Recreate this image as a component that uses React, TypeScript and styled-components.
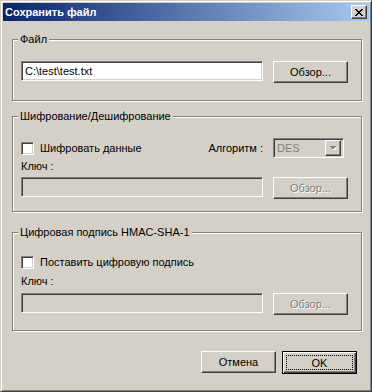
import React from 'react';
import styled, { createGlobalStyle, css } from 'styled-components';

const Global = createGlobalStyle`
  html, body {
    margin: 0;
    padding: 0;
    background: #d4d0c8;
  }
  * {
    box-sizing: border-box;
  }
`;

const FONT = `'Liberation Sans', 'DejaVu Sans', sans-serif`;

const raised = css`
  border: 1px solid;
  border-color: #fff #404040 #404040 #fff;
  box-shadow: inset -1px -1px 0 #808080, inset 1px 1px 0 #d4d0c8;
`;

const sunken = css`
  border: 1px solid;
  border-color: #808080 #fff #fff #808080;
  box-shadow: inset 1px 1px 0 #404040, inset -1px -1px 0 #d4d0c8;
`;

const Window = styled.div`
  width: 372px;
  height: 392px;
  display: flex;
  flex-direction: column;
  padding: 2px;
  background: #d4d0c8;
  border: 1px solid;
  border-color: #d4d0c8 #404040 #404040 #d4d0c8;
  box-shadow: inset 1px 1px 0 #fff, inset -1px -1px 0 #808080;
  font-family: ${FONT};
  font-size: 11px;
  color: #000;
`;

const TitleBar = styled.div`
  height: 18px;
  display: flex;
  align-items: center;
  justify-content: space-between;
  padding: 0 2px 0 2px;
  background: linear-gradient(to right, #0a246a, #a6caf0);
  color: #fff;
  font-weight: bold;
  font-size: 11px;
`;

const CloseButton = styled.div`
  width: 16px;
  height: 14px;
  display: flex;
  align-items: center;
  justify-content: center;
  background: #d4d0c8;
  ${raised};
`;

const Body = styled.div`
  flex: 1;
  display: flex;
  flex-direction: column;
  padding: 12px 7px 0 9px;
`;

const Group = styled.fieldset<{ $top: number; $pt: number; $pb: number }>`
  margin: ${(p) => p.$top}px 0 0 0;
  padding: ${(p) => p.$pt}px 13px ${(p) => p.$pb}px 8px;
  border: 1px solid #808080;
  box-shadow: inset 1px 1px 0 #fff, 1px 1px 0 #fff;
  min-width: 0;
`;

const Legend = styled.legend`
  margin-left: -3px;
  padding: 0 2px;
  line-height: 13px;
  background: #d4d0c8;
`;

const Row = styled.div<{ $h: number }>`
  display: flex;
  align-items: center;
  gap: 10px;
  height: ${(p) => p.$h}px;
`;

const TextBox = styled.div<{ $disabled?: boolean }>`
  width: 242px;
  height: 20px;
  align-self: flex-start;
  display: flex;
  align-items: center;
  padding-left: 3px;
  background: ${(p) => (p.$disabled ? '#d4d0c8' : '#fff')};
  ${sunken};
`;

const Button = styled.div<{ $disabled?: boolean; $default?: boolean }>`
  position: relative;
  width: 75px;
  height: ${(p) => (p.$default ? 23 : 22)}px;
  display: flex;
  align-items: center;
  justify-content: center;
  background: #d4d0c8;
  color: ${(p) => (p.$disabled ? '#808080' : '#000')};
  text-shadow: ${(p) => (p.$disabled ? '1px 1px 0 #fff' : 'none')};
  ${raised};
  ${(p) =>
    p.$default &&
    css`
      border: 1px solid #000;
      box-shadow: inset 1px 1px 0 #fff, inset -1px -1px 0 #404040, inset -2px -2px 0 #808080;
    `}
`;

const FocusRect = styled.span`
  position: absolute;
  inset: 3px;
  border: 1px dotted #000;
`;

const CheckLabel = styled.label`
  flex: 1;
  display: flex;
  align-items: center;
  gap: 6px;
`;

const CheckBox = styled.span`
  width: 13px;
  height: 13px;
  background: #fff;
  ${sunken};
`;

const FieldLabel = styled.div<{ $mt: number; $mb: number }>`
  line-height: 13px;
  margin: ${(p) => p.$mt}px 0 ${(p) => p.$mb}px 0;
`;

const AlgoLabel = styled.span``;

const Select = styled.div`
  width: 71px;
  height: 20px;
  margin-right: 4px;
  display: flex;
  align-items: center;
  justify-content: space-between;
  padding: 2px 2px 2px 3px;
  background: #d4d0c8;
  color: #808080;
  ${sunken};
`;

const DropButton = styled.div`
  width: 16px;
  height: 16px;
  display: flex;
  align-items: center;
  justify-content: center;
  ${raised};
`;

const Footer = styled.div`
  display: flex;
  justify-content: flex-end;
  gap: 6px;
  margin-top: 20px;
  padding-right: 5px;
`;

const xRows = ['xx....xx', '.xx..xx.', '..xxxx..', '...xx...', '..xxxx..', '.xx..xx.', 'xx....xx'];

const CloseGlyph = () => (
  <svg width="8" height="7" viewBox="0 0 8 7" shapeRendering="crispEdges">
    {xRows.map((r, y) =>
      r.split('').map((c, x) => (c === 'x' ? <rect key={`${x}-${y}`} x={x} y={y} width="1" height="1" fill="#000" /> : null))
    )}
  </svg>
);

const ArrowGlyph = () => (
  <svg width="8" height="5" viewBox="0 0 8 5" shapeRendering="crispEdges">
    <polygon points="1,1 8,1 4.5,4.5" fill="#fff" />
    <polygon points="0,0 7,0 3.5,3.5" fill="#808080" />
  </svg>
);

const App: React.FC = () => {
  return (
    <>
      <Global />
      <Window>
        <TitleBar>
          <span>Сохранить файл</span>
          <CloseButton>
            <CloseGlyph />
          </CloseButton>
        </TitleBar>
        <Body>
          <Group $top={0} $pt={15} $pb={17}>
            <Legend>Файл</Legend>
            <Row $h={22}>
              <TextBox>C:\test\test.txt</TextBox>
              <Button>Обзор...</Button>
            </Row>
          </Group>

          <Group $top={9} $pt={15} $pb={12}>
            <Legend>Шифрование/Дешифрование</Legend>
            <Row $h={20}>
              <CheckLabel>
                <CheckBox />
                Шифровать данные
              </CheckLabel>
              <AlgoLabel>Алгоритм :</AlgoLabel>
              <Select>
                <span>DES</span>
                <DropButton>
                  <ArrowGlyph />
                </DropButton>
              </Select>
            </Row>
            <FieldLabel $mt={2} $mb={4}>Ключ :</FieldLabel>
            <Row $h={22}>
              <TextBox $disabled />
              <Button $disabled>Обзор...</Button>
            </Row>
          </Group>

          <Group $top={14} $pt={15} $pb={15}>
            <Legend>Цифровая подпись HMAC-SHA-1</Legend>
            <Row $h={16}>
              <CheckLabel>
                <CheckBox />
                Поставить цифровую подпись
              </CheckLabel>
            </Row>
            <FieldLabel $mt={5} $mb={5}>Ключ :</FieldLabel>
            <Row $h={22}>
              <TextBox $disabled />
              <Button $disabled>Обзор...</Button>
            </Row>
          </Group>

          <Footer>
            <Button>Отмена</Button>
            <Button $default>
              OK
              <FocusRect />
            </Button>
          </Footer>
        </Body>
      </Window>
    </>
  );
};

export default App;
